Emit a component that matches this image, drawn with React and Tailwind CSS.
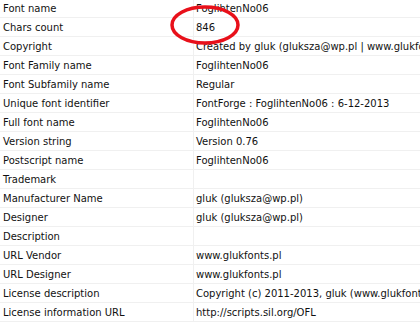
import React from 'react'

const rows = [
  ['Font name', 'FoglihtenNo06'],
  ['Chars count', '846'],
  ['Copyright', 'Created by gluk (gluksza@wp.pl | www.glukfonts.pl)'],
  ['Font Family name', 'FoglihtenNo06'],
  ['Font Subfamily name', 'Regular'],
  ['Unique font identifier', 'FontForge : FoglihtenNo06 : 6-12-2013'],
  ['Full font name', 'FoglihtenNo06'],
  ['Version string', 'Version 0.76'],
  ['Postscript name', 'FoglihtenNo06'],
  ['Trademark', ''],
  ['Manufacturer Name', 'gluk (gluksza@wp.pl)'],
  ['Designer', 'gluk (gluksza@wp.pl)'],
  ['Description', ''],
  ['URL Vendor', 'www.glukfonts.pl'],
  ['URL Designer', 'www.glukfonts.pl'],
  ['License description', 'Copyright (c) 2011-2013, gluk (www.glukfonts.pl)'],
  ['License information URL', 'http://scripts.sil.org/OFL'],
]

const App = () => {
  return (
    <div className="relative w-[420px] h-[325px] overflow-hidden bg-white text-[#111] text-[10px] font-['DejaVu_Sans',Verdana,sans-serif]">
      <div className="-mt-px">
        {rows.map(([label, value]) => (
          <div key={label} className="flex h-[19px] border-b border-[#f0f0f0]">
            <div className="w-[194px] shrink-0 pl-[3px] leading-[19px] border-r border-[#f0f0f0] whitespace-nowrap">
              {label}
            </div>
            <div className="pl-[2px] leading-[19px] whitespace-nowrap">{value}</div>
          </div>
        ))}
      </div>

      {/* red marker circle */}
      <svg className="absolute left-[168px] top-[4px]" width="74" height="42" viewBox="0 0 74 42">
        <ellipse cx="37" cy="21" rx="33" ry="18" fill="none" stroke="#e8101a" strokeWidth="3.5" />
      </svg>
    </div>
  )
}

export default App
